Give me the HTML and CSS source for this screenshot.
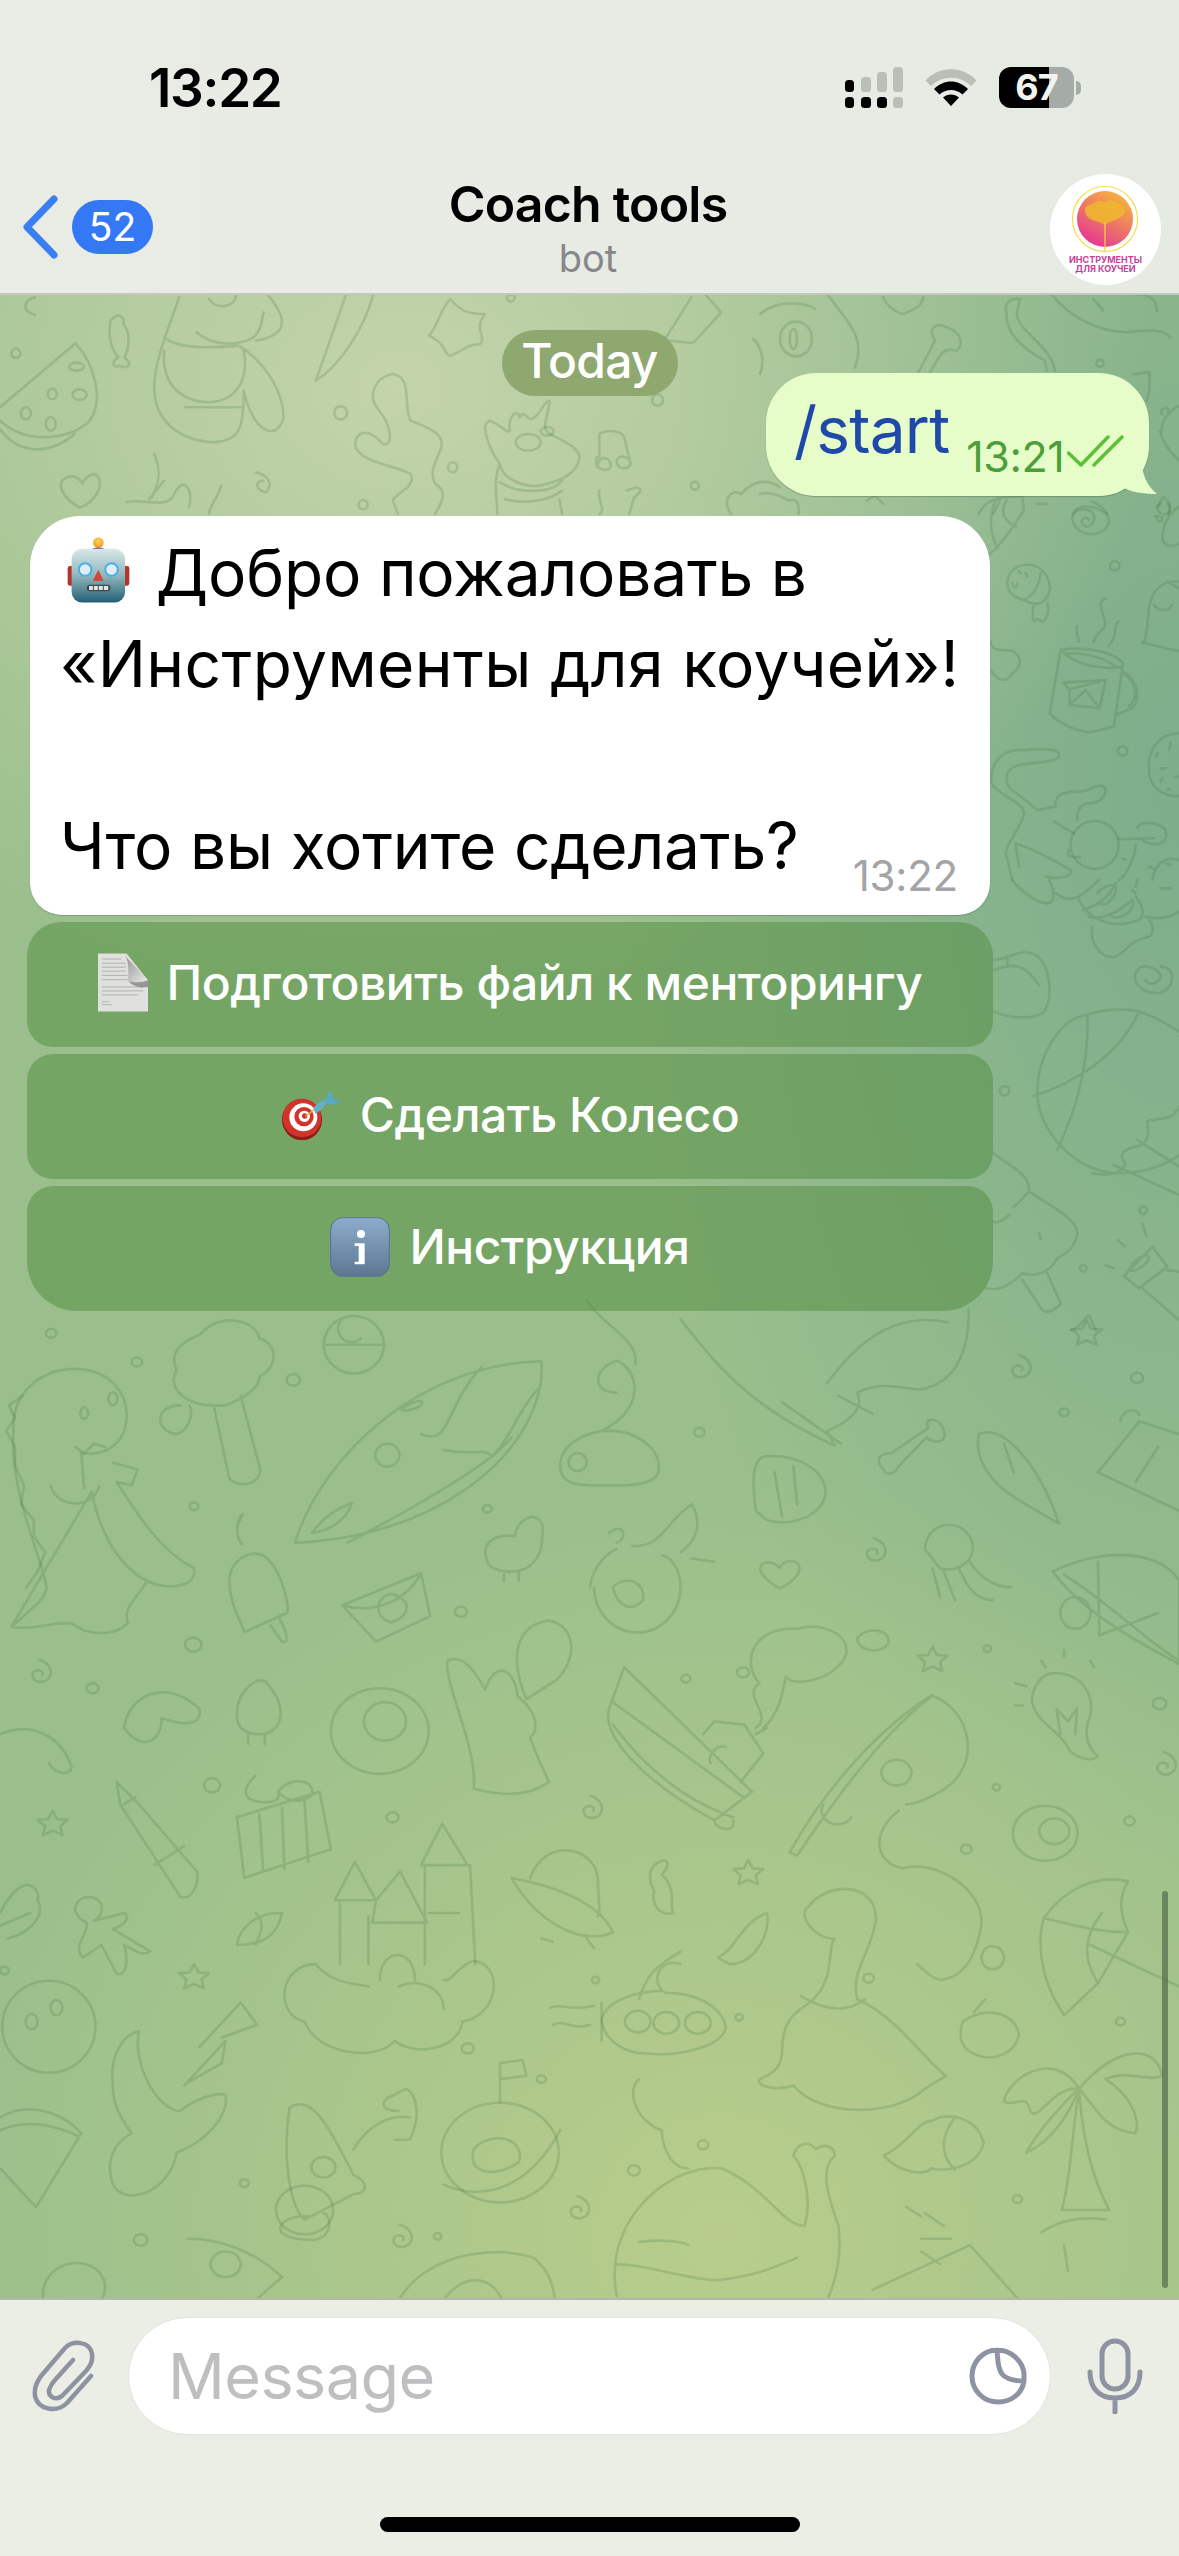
FILE: index.html
```html
<!DOCTYPE html>
<html lang="ru">
<head>
<meta charset="utf-8">
<title>Coach tools</title>
<link rel="stylesheet" href="styles.css">
</head>
<body>
<div class="screen">
  <header class="top">
    <div class="status">
      <span class="clock">13:22</span>
      <div class="status-icons">
        <svg class="signal" width="58" height="41" viewBox="0 0 58 41">
          <rect x="0" y="13" width="9" height="12" rx="3.5" fill="#000"/>
          <rect x="16" y="10" width="10" height="15" rx="3.5" fill="#b9bfb7"/>
          <rect x="32" y="5" width="10" height="20" rx="3.5" fill="#b9bfb7"/>
          <rect x="48" y="0" width="10" height="25" rx="3.5" fill="#b9bfb7"/>
          <rect x="0" y="30" width="9" height="11" rx="3.5" fill="#000"/>
          <rect x="16" y="30" width="10" height="11" rx="3.5" fill="#000"/>
          <rect x="32" y="30" width="10" height="11" rx="3.5" fill="#000"/>
          <rect x="48" y="30" width="10" height="11" rx="3.5" fill="#b9bfb7"/>
        </svg>
        <svg class="wifi" width="52" height="37" viewBox="0 0 52 37">
          <path d="M0.5 11.5C14 -3.5 38 -3.5 51.5 11.5L46 17C35 6 17 6 6 17Z" fill="#b9bfb7"/>
          <path d="M9 20C19 10 33 10 43 20L37.500 25.500C31 19.500 21 19.500 14.500 25.500Z" fill="#000"/>
          <path d="M18 28.500C22.500 24.500 29.500 24.500 34 28.500L26 37Z" fill="#000"/>
        </svg>
        <div class="battery">
          <div class="batt-body"><span class="batt-num">67</span></div>
          <div class="batt-nib"></div>
        </div>
      </div>
    </div>
    <nav class="nav">
      <div class="back">
        <svg width="38" height="64" viewBox="0 0 38 64"><path d="M33 4L6 32L33 60" fill="none" stroke="#3a7ff2" stroke-width="7" stroke-linecap="round" stroke-linejoin="round"/></svg>
        <span class="badge">52</span>
      </div>
      <div class="title">
        <span class="title-name">Coach tools</span>
        <span class="title-sub">bot</span>
      </div>
      <svg class="avatar" width="111" height="111" viewBox="0 0 111 111">
        <defs>
          <linearGradient id="ava" x1="0.8" y1="0" x2="0.2" y2="1"><stop offset="0" stop-color="#f6b83a"/><stop offset="0.55" stop-color="#ec6f6a"/><stop offset="1" stop-color="#e72e9c"/></linearGradient>
        </defs>
        <circle cx="55.500" cy="55.500" r="55.500" fill="#fff"/>
        <circle cx="55" cy="45" r="32.500" fill="none" stroke="#f5dc4e" stroke-width="1.200"/>
        <circle cx="55" cy="45" r="28" fill="url(#ava)"/>
        <path d="M55 51C48 46 38 48 35 38C34 32 40 30 43 30C46 27 52 25 54 29C58 25 66 26 69 30C73 31 76 34 75 38C70 47 60 46 55 51Z" fill="#eeb62f" opacity=".9"/>
        <path d="M55 48V77" stroke="#f3cf3c" stroke-width="1.300"/>
        <text x="55.500" y="89" class="ava-text">ИНСТРУМЕНТЫ</text>
        <text x="55.500" y="98" class="ava-text">ДЛЯ КОУЧЕЙ</text>
      </svg>
    </nav>
  </header>

  <main class="chat">
    <svg class="doodles" viewBox="0 295 1179 2003" preserveAspectRatio="none" aria-hidden="true">
      <defs>
        <path id="star" d="M0 -20L6 -7L20 -6L10 4L13 18L0 11L-13 18L-10 4L-20 -6L-6 -7Z"/>
        <path id="spiral" d="M4 2C8 -4 -2 -8 -7 -3C-12 4 -6 14 3 13C14 12 18 0 14 -9C11 -16 6 -20 0 -22"/>
        <path id="heart" d="M0 24C-14 14 -26 4 -26 -8C-26 -18 -10 -22 0 -8C6 -24 26 -22 26 -8C26 6 12 16 0 24Z"/>
      </defs>
      <g transform="translate(0 1300) scale(.752 .6386)">
        <path d="M15 512C40 485 60 470 62 450C55 400 12 300 18 205C15 140 60 105 105 108C150 112 172 150 168 190C165 225 140 245 108 240L112 295M132 292C122 330 75 325 68 292M150 255L183 265L175 290L155 285M122 300C130 350 150 410 195 440C185 465 162 480 170 505C155 528 115 525 98 508C80 500 50 518 15 512ZM195 440C225 455 262 450 258 420C215 395 185 340 155 285"/>
        <path d="M30 150L12 165L20 185L8 205L20 230L20 260L32 290L28 320L45 345L45 370L60 395L50 425L35 450M100 230L112 240L125 225L140 230M150 145A6 10 0 1 0 150.100 145M112 168A5 9 0 1 0 112.100 168"/>
        <path d="M300 165C250 170 220 140 235 110C220 70 260 60 270 50C290 20 340 30 345 60C370 70 370 105 345 120C345 145 310 160 300 165ZM285 170L305 280C320 295 345 290 346 265L320 150M240 165C205 165 205 205 235 210C250 205 258 180 252 165"/>
        <path d="M470 115A40 45 0 1 1 471 115ZM432 70H510M455 30A12 14 0 0 0 480 60"/>
        <path d="M392 380C430 240 560 100 720 96C728 220 600 370 392 380ZM462 380C560 320 660 250 680 215M560 210C600 230 590 170 640 105M590 235C640 245 640 230 655 245C680 215 690 170 715 140M415 365C430 340 450 325 468 318C460 345 440 360 415 365ZM535 170C555 155 565 155 560 165C545 175 530 175 535 170ZM515 225A16 18 0 1 0 515.100 225"/>
        <path d="M745 260C745 225 780 205 810 205C850 205 878 235 876 265C876 285 850 292 810 290C770 292 745 290 745 260ZM768 240A12 14 0 1 0 768.100 240M800 205C860 170 850 110 820 95C790 105 785 145 820 145M780 0C800 40 850 60 845 100"/>
        <path d="M905 30C950 100 1000 170 1110 228L1100 205C1130 190 1150 170 1140 145C1175 125 1200 140 1225 140C1270 130 1290 80 1288 15M1040 160L1118 225M1100 130C1150 50 1200 20 1260 35M1115 150L1160 178"/>
        <path d="M1005 330C1000 280 1000 255 1015 245C1060 240 1095 265 1098 300C1095 340 1050 355 1020 345ZM1030 270L1040 340M1055 260L1060 320"/>
        <path d="M1175 265C1165 255 1165 240 1185 240L1235 200C1225 185 1250 180 1255 205C1262 225 1240 225 1232 215L1195 260C1190 275 1175 275 1175 265Z"/>
        <path d="M1302 210C1340 190 1390 280 1408 350L1350 310C1310 280 1295 240 1302 210ZM1335 225L1348 270"/>
        <path d="M1460 270L1515 190L1568 210M1460 270L1568 330M1490 190C1490 175 1510 165 1515 180M1510 285L1540 230"/>
        <path d="M315 360C318 340 325 335 322 335C312 350 315 375 322 382M305 440C305 410 330 390 350 400C375 420 385 480 382 490L325 520C315 490 305 470 305 440ZM360 510L375 535C385 540 382 520 372 500"/>
        <path d="M455 478L560 428L572 495L500 535ZM455 478C490 490 535 480 560 428M520 460C500 465 495 495 520 505C545 495 550 470 520 460Z"/>
        <path d="M650 415C635 380 660 365 685 370C685 345 715 325 722 355C720 375 725 400 700 420C680 430 660 425 650 415ZM670 430V440M690 425V440"/>
        <path d="M790 450A57 70 0 1 0 905 450C905 420 890 400 880 400M820 390C800 400 785 430 785 450M815 450C830 430 860 440 855 470C840 490 820 480 815 450ZM810 365C830 345 835 375 820 380M840 385C880 390 890 340 920 320C935 350 925 380 905 395M920 405L950 410"/>
        <use href="#heart" x="1037" y="428"/>
        <use href="#spiral" x="1162" y="395"/>
        <path d="M1230 390A32 38 0 1 1 1294 390C1290 420 1265 425 1250 420ZM1255 425L1270 470M1275 420C1285 445 1295 470 1320 470M1290 410C1300 430 1320 450 1345 450M1240 420L1250 465"/>
        <path d="M1400 425C1480 380 1550 400 1568 440L1568 570C1520 540 1440 490 1400 425ZM1415 430C1470 470 1520 530 1568 565M1460 410L1462 525M1462 525L1540 490M1430 465A20 25 0 1 0 1430.100 465"/>
        <path d="M1060 515C1000 510 985 570 1010 600C985 620 1030 650 1005 670M1060 515C1090 505 1130 520 1125 555C1115 590 1060 610 1045 590C1040 620 1035 650 1015 670M1140 530C1150 510 1190 515 1180 540C1170 555 1140 550 1140 530Z"/>
        <path d="M810 640C800 680 850 750 950 815L1000 770L830 575ZM815 665C850 720 900 780 975 810M815 630L990 780M935 680L950 660L990 665L1015 710L985 755M1005 680L1020 670M965 700C950 695 940 720 945 725M950 815C950 830 980 835 975 815"/>
        <path d="M1050 865L1060 870C1100 800 1170 680 1240 620C1290 640 1310 730 1250 770C1220 790 1210 790 1205 790M1050 865C1100 760 1170 670 1240 618M1095 790A20 20 0 1 0 1132 810M1192 760A20 20 0 1 1 1192.100 760M1195 800C1160 830 1160 880 1200 890C1240 875 1310 920 1305 980C1300 1010 1290 1060 1250 1065C1235 1060 1225 1045 1220 1040M1320 1012A15 18 0 1 0 1320.100 1012"/>
        <path d="M1395 585C1440 580 1455 620 1450 650C1440 680 1445 700 1460 715C1450 725 1425 715 1420 700C1405 670 1375 660 1372 625C1375 600 1385 590 1395 585ZM1410 680L1405 640L1420 660L1432 640L1430 680M1350 600L1365 605M1385 565L1390 575M1415 548V558M1450 565L1455 575M1350 635H1360"/>
        <g><circle cx="1390" cy="835" r="43"/><circle cx="1402" cy="832" r="20"/><use href="#spiral" x="1548" y="730"/></g>
        <path d="M155 755L160 790L240 935C255 940 265 915 262 895L185 790ZM165 790L180 778M205 885L245 855"/>
        <path d="M315 810L425 770L440 860L325 905ZM340 745C325 760 320 780 340 785C370 790 372 780 370 770C385 745 420 750 415 775C400 790 380 785 370 770M345 805L350 895M375 795L378 890M405 785L410 880"/>
        <path d="M0 960C30 890 55 920 50 940C60 960 45 990 10 1000M40 960L0 980"/>
        <path d="M118 935C140 935 140 965 125 972L165 960C175 965 165 980 150 985L200 1020C190 1030 175 1015 165 1010C170 1030 170 1060 155 1055L135 1010L110 1030C95 1010 120 990 115 975C90 960 100 935 118 935Z"/>
        <path d="M315 1010C318 985 340 958 375 960C370 990 355 1010 315 1010ZM340 960C355 975 345 995 340 1010"/>
        <path d="M445 940L472 880L500 940ZM500 940L532 895L568 975H495ZM560 885L588 820L622 885ZM452 945V1040M490 965V1040M565 885V1040M625 885L632 1040M505 1065C505 1015 550 1010 552 1065M570 960H610"/>
        <path d="M420 1040C370 1040 365 1120 405 1130C420 1180 500 1195 525 1160C550 1185 610 1175 615 1130C665 1120 670 1040 630 1035C610 1040 600 1070 590 1065M420 1040C440 1070 470 1070 490 1075M530 1075C560 1060 590 1080 590 1110"/>
        <path d="M680 905C720 985 780 1010 815 990C800 950 750 920 680 905ZM705 905C725 840 790 855 795 905C795 945 800 960 795 965M720 1000L735 1005M780 1000L790 1015"/>
        <path d="M870 885C885 870 895 880 880 900C900 920 890 945 895 960C880 965 865 950 870 925C860 905 865 890 870 885Z"/>
        <path d="M955 1030C980 1015 985 975 1020 960C1025 990 1005 1040 970 1040Z"/>
        <path d="M800 1130C800 1090 880 1075 885 1085C940 1085 965 1120 965 1140C960 1170 900 1185 860 1180C830 1180 805 1160 800 1130ZM850 1095C860 1050 880 1040 905 1020M880 1080A22 25 0 0 1 905 1040"/>
        <circle cx="848" cy="1130" r="17"/><circle cx="886" cy="1132" r="17"/><circle cx="928" cy="1132" r="17"/>
        <path d="M732 1108C745 1100 755 1115 790 1105M735 1135C750 1125 760 1145 785 1135M800 1100V1160"/>
        <path d="M1040 1175C1040 1110 1075 1110 1085 1090C1110 1060 1100 1010 1110 1000C1080 1000 1060 960 1075 950C1100 910 1165 910 1165 970C1160 1020 1130 1050 1140 1095C1190 1120 1230 1190 1258 1215L1230 1235C1190 1280 1090 1280 1055 1230C1030 1240 1005 1230 1010 1220C1030 1210 1040 1200 1040 1175ZM1065 1090C1100 1115 1130 1115 1150 1095"/>
        <path d="M1280 1130C1310 1105 1350 1115 1355 1150C1350 1180 1320 1195 1295 1180C1275 1170 1275 1150 1280 1130ZM1295 1115L1310 1095"/>
        <path d="M1388 968C1430 900 1480 905 1500 910C1480 950 1500 985 1500 990L1460 1070L1415 1120C1380 1060 1380 1000 1388 968ZM1500 990C1450 990 1420 975 1388 968M1460 1070C1440 1030 1440 1000 1465 960M1450 1010L1568 1075"/>
        <path d="M1435 1235C1400 1170 1340 1220 1335 1255C1350 1265 1365 1240 1370 1270C1380 1290 1400 1230 1435 1235ZM1435 1235C1490 1160 1540 1170 1545 1215C1530 1225 1500 1205 1470 1220C1510 1250 1515 1290 1510 1305C1470 1300 1460 1270 1435 1235ZM1435 1235C1420 1250 1380 1300 1365 1335C1395 1320 1420 1280 1435 1235ZM1435 1240C1425 1300 1425 1370 1412 1425H1475C1450 1370 1440 1310 1435 1240ZM1385 1460C1410 1440 1440 1435 1470 1440M1415 1480L1420 1520"/>
        <path d="M1175 1340C1200 1370 1230 1370 1238 1360C1255 1365 1300 1360 1308 1320C1300 1280 1260 1270 1240 1285C1220 1285 1210 1320 1175 1340ZM1270 1280C1250 1310 1250 1340 1270 1362"/>
        <path d="M0 1280C45 1250 90 1280 108 1305L48 1420C30 1400 10 1370 0 1360M0 1300C40 1280 80 1295 105 1310"/>
        <path d="M150 1230C145 1180 165 1150 185 1145C175 1195 210 1270 240 1270C260 1250 290 1240 300 1245C305 1280 270 1320 235 1335C225 1400 165 1420 150 1385C140 1350 150 1320 175 1305C160 1280 150 1260 150 1230Z"/>
        <path d="M265 1170L320 1100L342 1135L295 1155M245 1230L300 1160L295 1195L250 1225"/>
        <ellipse cx="65" cy="1138" rx="62" ry="72"/><ellipse cx="75" cy="1108" rx="8" ry="12"/><ellipse cx="42" cy="1130" rx="8" ry="12"/>
        <path d="M385 1265C415 1240 440 1300 470 1370C490 1380 490 1400 470 1400L405 1440C385 1420 375 1340 385 1265ZM410 1435C375 1430 345 1470 415 1472C445 1470 440 1430 430 1430M470 1330C490 1290 520 1275 545 1280"/>
        <circle cx="430" cy="1358" r="16"/><circle cx="405" cy="1425" r="38"/>
        <path d="M530 1270C510 1270 505 1260 515 1250L540 1235C555 1245 560 1280 545 1315L525 1315"/>
        <circle cx="665" cy="1335" r="78"/>
        <path d="M590 1385C615 1400 690 1420 745 1300M665 1255V1220L700 1215L695 1190L665 1195V1220M630 1330C650 1300 700 1310 690 1350C660 1375 620 1370 630 1330Z"/>
        <path d="M850 1220C830 1240 850 1290 880 1300C880 1320 890 1360 915 1360"/>
        <path d="M820 1560C800 1430 900 1350 960 1360C1020 1390 1040 1450 1070 1450C1080 1410 1070 1360 1055 1340C1060 1320 1075 1315 1085 1330C1095 1320 1110 1325 1110 1340C1090 1360 1100 1400 1115 1450C1120 1500 1110 1540 1100 1566M820 1510C860 1510 900 1530 950 1535C1000 1530 1030 1515 1060 1500M850 1475C880 1470 910 1475 915 1480"/>
        <path d="M250 1470C280 1470 330 1480 375 1530L340 1566M300 1490A20 20 0 1 0 300.100 1490"/>
        <path d="M58 1566C50 1520 100 1490 130 1520C145 1540 140 1556 135 1566"/>
        <path d="M530 1566C570 1490 660 1480 710 1500C730 1520 735 1540 738 1566M590 1566C610 1530 650 1520 668 1566"/>
        <path d="M1160 1550L1290 1480L1355 1566M1205 1420L1225 1435M1230 1430L1255 1450M1225 1470H1265M1225 1490L1250 1510"/>
        <g><use href="#star" x="1445" y="52"/><use href="#star" x="70" y="820"/><use href="#star" x="995" y="897"/><use href="#star" x="258" y="1060"/><use href="#star" x="1240" y="563"/>
          <use href="#spiral" x="1355" y="108"/><use href="#spiral" x="52" y="585"/><use href="#spiral" x="785" y="798"/><use href="#spiral" x="768" y="1425"/><use href="#spiral" x="532" y="1470"/></g>
        <path d="M165 670C170 620 220 590 265 640C270 670 240 665 215 655C215 690 190 710 165 670ZM0 680C40 660 80 680 95 730C95 745 75 745 65 725"/>
        <path d="M315 650C315 610 345 585 355 600C385 640 375 680 345 680C325 680 315 670 315 650ZM330 680V695M352 680V695"/>
        <ellipse cx="505" cy="675" rx="65" ry="67"/><ellipse cx="512" cy="660" rx="28" ry="30"/>
        <path d="M630 765C635 700 590 600 595 565C620 550 640 600 645 610C660 560 685 580 688 620C710 640 720 670 705 685C715 720 725 740 730 755C700 780 660 775 630 765ZM720 610L700 625C680 570 680 510 730 502C765 510 770 560 740 595Z"/>
        <g><circle cx="68" cy="52" r="7"/><circle cx="182" cy="97" r="7"/><circle cx="390" cy="125" r="9"/><circle cx="258" cy="323" r="6"/><circle cx="648" cy="327" r="6"/><circle cx="930" cy="207" r="7"/><circle cx="1415" cy="176" r="6"/><circle cx="1512" cy="122" r="8"/><circle cx="613" cy="488" r="8"/><circle cx="257" cy="540" r="11"/><circle cx="123" cy="608" r="8"/><circle cx="282" cy="760" r="11"/><circle cx="522" cy="810" r="8"/><circle cx="1285" cy="860" r="7"/><circle cx="1502" cy="816" r="7"/><circle cx="1325" cy="763" r="5"/><circle cx="1542" cy="632" r="9"/><circle cx="1313" cy="546" r="5"/><circle cx="912" cy="593" r="6"/><circle cx="988" cy="583" r="8"/><circle cx="6" cy="1050" r="6"/><circle cx="622" cy="1172" r="8"/><circle cx="792" cy="1065" r="5"/><circle cx="983" cy="1123" r="5"/><circle cx="1155" cy="1062" r="7"/><circle cx="1490" cy="1130" r="6"/><circle cx="720" cy="1220" r="6"/><circle cx="325" cy="1383" r="6"/><circle cx="935" cy="1323" r="7"/><circle cx="843" cy="1363" r="8"/><circle cx="1353" cy="1408" r="6"/><circle cx="187" cy="1472" r="9"/><circle cx="582" cy="1466" r="5"/></g>
      </g>
      <g transform="translate(0 294) scale(.4974 .3333)">
        <path d="M70 10C45 20 45 55 70 62M0 340L152 148C190 210 210 320 180 380C150 430 60 460 0 380M0 405C30 470 90 495 150 420"/>
        <ellipse cx="154" cy="218" rx="15" ry="12"/><ellipse cx="105" cy="300" rx="9" ry="16"/><ellipse cx="160" cy="302" rx="14" ry="16"/><ellipse cx="52" cy="358" rx="10" ry="18"/><ellipse cx="102" cy="390" rx="10" ry="20"/><ellipse cx="32" cy="178" rx="9" ry="14"/>
        <path d="M222 80C240 50 250 70 248 90C265 120 258 170 250 190C270 215 255 225 240 215C225 225 225 200 238 190C220 160 218 120 222 80Z"/>
        <path d="M360 10C340 100 310 200 310 280C310 380 360 440 430 445C480 440 490 410 490 290C510 425 560 440 570 370C570 290 530 200 480 155C440 160 360 170 330 130M330 170C325 250 350 320 420 325C480 320 500 250 490 170M372 340H490M395 115C430 160 480 155 510 130C530 100 525 70 530 55M540 5C570 60 590 120 515 140M420 15C430 45 470 45 475 5"/>
        <path d="M695 5L635 260C680 220 730 110 750 5"/>
        <path d="M905 15C880 60 880 100 862 125C900 150 890 180 905 185C935 170 930 155 965 150C980 135 950 105 975 60C950 60 930 60 905 15Z"/>
        <path d="M1335 140L1390 10M1335 140C1370 140 1380 150 1395 145L1450 55L1420 5"/>
        <path d="M790 240C750 250 740 310 760 345C790 400 790 460 770 450C730 385 710 430 715 460C730 510 790 510 825 540C840 580 790 600 790 620L800 660M790 240C830 250 810 330 825 380C860 400 900 420 885 470C870 520 865 540 875 570C900 590 890 620 875 660"/>
        <ellipse cx="685" cy="357" rx="13" ry="20"/><ellipse cx="910" cy="520" rx="9" ry="15"/><ellipse cx="730" cy="632" rx="9" ry="14"/>
        <path d="M160 640C140 625 115 590 125 560C145 530 165 560 165 570C180 530 205 530 200 580C195 610 175 635 160 640ZM310 480C325 530 320 570 305 610M330 560L300 615M255 625C280 610 340 650 350 600C370 540 390 590 380 640M445 575C435 620 420 640 420 660M515 535C540 545 550 570 535 595C515 590 510 560 530 560"/>
        <path d="M1000 660C1000 620 990 560 1005 510C990 480 960 390 985 380C1010 395 1020 420 1025 410C1020 370 1040 340 1045 370C1055 340 1060 390 1075 370C1090 350 1095 320 1105 320C1105 360 1085 400 1105 420C1130 440 1165 460 1165 490C1160 540 1130 560 1085 575C1060 580 1010 560 1005 510M1005 565C1040 600 1110 600 1130 560M1015 615C1050 630 1100 625 1130 590M1125 615L1130 660"/>
        <circle cx="1062" cy="445" r="25"/><circle cx="1100" cy="412" r="13"/>
        <path d="M1205 420C1220 405 1250 410 1255 430L1268 510C1260 530 1240 525 1240 500C1245 480 1260 490 1265 495M1200 490C1190 530 1230 540 1228 510C1225 490 1205 480 1200 520M1205 420L1205 490M1205 590C1200 620 1220 650 1205 660M1260 590C1290 570 1295 590 1275 610L1265 660"/>
        <ellipse cx="1322" cy="318" rx="11" ry="17"/><ellipse cx="1397" cy="575" rx="8" ry="12"/><ellipse cx="1027" cy="12" rx="8" ry="10"/>
        <path d="M1470 660C1450 620 1470 580 1490 600C1520 550 1550 560 1568 580"/>
      </g>
      <g transform="translate(760 294) scale(.3333)">
        <path d="M0 60C60 10 150 30 165 45M205 5C260 80 320 130 285 220M-20 135A80 90 0 0 1 0 240"/>
        <ellipse cx="108" cy="135" rx="48" ry="52"/><ellipse cx="100" cy="135" rx="11" ry="30"/>
        <path d="M475 235L525 140C500 100 530 85 560 100C590 110 620 140 590 170C570 165 555 165 540 185L510 235"/>
        <path d="M370 10C380 40 420 60 430 60C480 40 485 30 490 10"/>
        <path d="M740 60C730 30 750 10 780 15L770 60C780 120 870 150 885 230M740 60C735 110 780 160 855 200L860 230"/>
        <path d="M875 0C920 60 1000 110 1100 115C1140 110 1210 100 1230 130M1000 15L1030 50M1115 0C1165 0 1190 10 1190 50"/>
        <circle cx="1020" cy="208" r="11"/>
        <path d="M1120 240L1168 235C1170 270 1170 300 1160 320"/>
        <path d="M1205 420C1200 380 1230 350 1257 335M1205 360C1200 340 1230 330 1225 360M1200 410C1210 460 1250 490 1257 500"/>
        <path d="M1190 640L1210 610C1230 620 1235 640 1225 660"/>
        <path d="M0 600C40 590 70 610 85 620C110 610 120 630 115 660M320 620L345 605L370 630M830 630L860 630M940 660C950 630 1000 630 1040 660M700 660L720 620"/>
      </g>
      <g transform="translate(979 480) scale(.3333)">
        <path d="M0 100C20 60 50 50 130 50L135 90C110 130 70 190 30 225L0 185M50 60C30 110 30 150 55 205M90 50C60 90 70 120 110 140"/>
        <path d="M340 65C395 90 400 130 375 150C340 175 285 160 280 115C280 85 325 80 342 100C355 125 330 150 312 135C300 120 320 105 330 120"/>
        <path d="M85 310C85 270 120 250 160 255C200 265 220 310 210 340C195 380 160 375 135 360C105 350 85 340 85 310ZM135 360C170 340 180 315 185 280M165 375C160 395 160 415 165 425C175 410 180 420 190 425C205 420 212 390 205 370M100 310C105 330 115 320 115 310M120 275L125 280M140 280L145 290"/>
        <circle cx="407" cy="257" r="14"/><circle cx="431" cy="813" r="14"/>
        <path d="M380 355C340 370 400 430 370 450C345 470 345 480 345 485M295 440C285 455 300 470 300 485M418 425C400 440 420 470 388 498"/>
        <path d="M245 510L212 700C240 730 300 760 340 755C370 750 400 740 405 740L432 550C400 510 300 500 245 510ZM245 510C290 560 380 570 430 560M265 520C320 520 370 530 410 560M430 575C470 590 490 650 460 685L410 705M440 585C470 610 480 650 450 680"/>
        <path d="M252 608L380 600L362 685L272 675V628ZM272 628L380 600M272 675L320 630L362 685"/>
        <path d="M600 305C550 300 520 330 510 380C505 430 505 480 490 490C520 490 560 510 600 512M525 375C540 395 570 395 580 375M565 305C580 310 590 320 600 325"/>
        <path d="M600 760C540 760 505 810 510 870C510 920 550 950 600 948M530 830L535 820M575 790L570 810M545 865H560M550 895L545 905M565 930L570 925M590 890H600"/>
        <path d="M35 485C40 510 50 510 100 512C130 530 130 560 100 580C85 605 60 610 35 570"/>
        <path d="M240 825C240 800 170 810 120 810C70 810 30 850 38 910C60 950 130 960 135 1000C130 1040 80 1090 80 1120L100 1200M240 825C240 850 170 845 120 855C70 870 70 920 120 945L175 990L230 980C225 940 260 935 300 935C330 935 345 915 370 918C395 930 370 970 330 970C310 970 290 990 295 1020"/>
        <circle cx="347" cy="1095" r="72"/>
        <path d="M225 1025L285 1060M420 1078L525 1075M430 1135L440 1140M475 1045C480 1025 530 1020 560 1050C570 1090 530 1105 490 1080M470 1095C470 1130 440 1190 420 1200M270 1110C260 1130 280 1135 305 1130M110 1095L120 1160M110 1090C170 1110 240 1150 275 1170C280 1190 240 1200 200 1190"/>
        <path d="M520 1200C530 1140 570 1130 600 1140M510 1160L530 1170M560 1150L575 1155"/>
        <path d="M540 110C520 100 530 115 540 125C555 125 550 110 540 110ZM545 70A18 18 0 1 0 565 70M600 80C570 100 550 130 550 180C560 205 590 200 600 190"/>
      </g>
      <g transform="translate(979 880) scale(.3333)">
        <path d="M100 0C130 40 180 70 200 70C240 70 220 20 210 0M230 40C260 60 270 60 300 50C330 30 350 10 360 0M300 60C330 120 400 150 480 120C505 100 480 60 470 50M340 140C330 190 370 240 410 230C450 210 450 180 510 170C530 155 520 130 510 120M500 110C540 120 580 110 600 95M310 90C380 70 400 30 410 10M355 40C370 20 400 10 410 20C415 50 380 85 360 70M330 110C360 120 400 110 460 60M400 110C440 120 470 80 460 60M460 30L470 40M470 20L475 0M545 25H575"/>
        <path d="M545 260C590 260 595 320 540 340C480 340 455 300 475 270C490 250 530 260 545 285C550 300 515 325 500 300"/>
        <path d="M45 240C80 240 130 200 170 225C220 260 220 360 195 395C170 420 90 415 45 395M45 270C90 255 130 240 180 315M85 230V255"/>
        <circle cx="77" cy="633" r="14"/><circle cx="493" cy="991" r="11"/><circle cx="313" cy="1165" r="10"/>
        <path d="M325 405C250 410 175 520 175 640C175 750 290 880 420 880C500 880 570 850 600 825M325 405C380 385 450 385 480 395C520 405 580 440 600 455M325 405C330 520 310 650 235 810M165 648C280 610 420 530 480 395M340 880C390 890 430 880 440 850C420 830 425 810 470 800C510 795 510 760 505 725C530 710 580 730 600 680M405 855L600 945M475 780L600 860"/>
        <path d="M45 820C90 860 155 880 150 935C220 980 300 1020 295 1065C280 1115 260 1120 235 1135C210 1180 170 1190 130 1180C80 1230 50 1230 20 1225M145 938C130 960 110 975 105 980M90 1005C70 1025 55 1030 40 1025M180 1060L185 1078M130 1200L190 1290C210 1305 240 1280 245 1270L205 1180"/>
        <path d="M380 1157L405 1165M415 1080L437 1098M490 1030L503 1070M435 1188L520 1100L565 1160L480 1225ZM450 1170C460 1140 500 1120 510 1130C510 1150 470 1180 450 1170ZM490 1225L600 1320M560 1170L600 1175M275 1350C300 1350 320 1310 330 1305L350 1350"/>
      </g>
    </svg>

    <div class="day">Today</div>

    <div class="out">
      <span class="out-text">/start</span>
      <span class="out-time">13:21</span>
      <svg class="checks" width="58" height="34" viewBox="0 0 58 34"><path d="M1.500 18L14 30L41 2M27 30L55 2" fill="none" stroke="#5bc234" stroke-width="3.500" stroke-linecap="round" stroke-linejoin="round"/></svg>
      <svg class="out-tail" width="40" height="42" viewBox="0 0 40 42"><path d="M0 0H20C20 20 26 32 36 40C20 40 6 38 -2 30Z" fill="#e6fdc9"/></svg>
    </div>

    <div class="in">
      <div class="in-text">
        <p class="line"><svg class="robot" viewBox="80 50 197 205" width="65" height="68">
          <defs>
            <linearGradient id="rh" x1="0" y1="0" x2="0" y2="1"><stop offset="0" stop-color="#d9e8e8"/><stop offset=".5" stop-color="#8fb6bd"/><stop offset="1" stop-color="#245f74"/></linearGradient>
            <radialGradient id="rb" cx=".5" cy=".35" r=".6"><stop offset="0" stop-color="#ffd45a"/><stop offset="1" stop-color="#f09a20"/></radialGradient>
          </defs>
          <rect x="85" y="140" width="20" height="60" rx="7" fill="#b5332b"/><rect x="252" y="140" width="20" height="60" rx="7" fill="#b5332b"/>
          <circle cx="178" cy="70" r="16" fill="url(#rb)"/>
          <path d="M154 92C165 82 190 82 202 92C195 103 162 103 154 92Z" fill="#6c4f9a"/>
          <rect x="97" y="88" width="162" height="163" rx="32" fill="url(#rh)"/>
          <circle cx="138" cy="151" r="19" fill="#dfeef0" stroke="#4aaee6" stroke-width="6"/>
          <circle cx="218" cy="151" r="19" fill="#dfeef0" stroke="#4aaee6" stroke-width="6"/>
          <path d="M178 152L194 186H161Z" fill="#cf4a3a"/>
          <rect x="143" y="197" width="72" height="20" rx="9" fill="#3e4a50"/>
          <path d="M150 201h58v12h-58z" fill="#e4e6e6"/><path d="M163 200v14M178 200v14M193 200v14" stroke="#3e4a50" stroke-width="3"/>
        </svg> Добро пожаловать в</p>
        <p class="line line-wide">«Инструменты для коучей»!</p>
        <p class="line">&nbsp;</p>
        <p class="line">Что вы хотите сделать?</p>
      </div>
      <span class="in-time">13:22</span>
    </div>

    <div class="keys">
      <div class="key key-first">
        <svg class="ico" width="50" height="59" viewBox="113 68 152 177">
          <defs><linearGradient id="pf" x1="0" y1="0" x2="1" y2="1"><stop offset="0" stop-color="#8b8b8b"/><stop offset="1" stop-color="#ececec"/></linearGradient></defs>
          <path d="M113 68H200L265 150V245H113Z" fill="#e0e0de"/>
          <path d="M125 85h60M125 98h72M125 110h72M125 122h72M125 135h78M125 148h78M125 170h125M125 182h125M125 194h110M125 215h22M125 224h30" stroke="#9a9a9a" stroke-width="2"/>
          <path d="M190 70C210 85 205 130 205 152C225 160 250 155 265 150Z" fill="url(#pf)"/>
          <path d="M205 152C225 160 250 155 265 150V170C240 175 215 165 205 152Z" fill="#666" opacity=".6"/>
        </svg>
        <span>Подготовить файл к менторингу</span>
      </div>
      <div class="key">
        <svg class="ico" width="60" height="51" viewBox="675 488 180 153">
          <ellipse cx="738" cy="580" rx="60" ry="62" fill="#8f1a16"/>
          <ellipse cx="738" cy="575" rx="58" ry="58" fill="#d0342b"/>
          <ellipse cx="742" cy="573" rx="42" ry="42" fill="#fff"/>
          <ellipse cx="744" cy="571" rx="29" ry="29" fill="#d0342b"/>
          <ellipse cx="745" cy="570" rx="17" ry="17" fill="#fff"/>
          <ellipse cx="746" cy="569" rx="8" ry="8" fill="#d0342b"/>
          <path d="M748 570L775 550" stroke="#e5b53a" stroke-width="4"/>
          <path d="M772 545C785 530 800 520 812 522C812 535 795 555 778 562Z" fill="#62b1c9"/>
          <path d="M806 528L822 490L835 520L855 525L830 536L810 532Z" fill="#5aa8c4"/>
        </svg>
        <span>Сделать Колесо</span>
      </div>
      <div class="key key-last">
        <svg class="ico" width="60" height="60" viewBox="810 858 180 180">
          <defs><linearGradient id="ib" x1="0" y1="0" x2="0" y2="1"><stop offset="0" stop-color="#8daccc"/><stop offset="1" stop-color="#5e7692"/></linearGradient></defs>
          <rect x="812" y="860" width="176" height="176" rx="36" fill="url(#ib)" stroke="#587190" stroke-width="3"/>
          <circle cx="903" cy="909" r="12" fill="#fff"/>
          <path d="M884 937H914V1000H884V992H896V945H884Z" fill="#fff"/>
        </svg>
        <span>Инструкция</span>
      </div>
    </div>

    <div class="scroll"></div>
  </main>

  <footer class="bottom">
    <div class="composer">
      <svg class="icon-clip" width="64" height="72" viewBox="0 0 64 72"><path d="M59 36L35 63C25 73 6 70 3 56C2 47 5 42 9 36L33 8C41 0 58 1 60 14C61 22 58 26 54 31L30 56C24 61 16 57 17 50C18 47 21 42 23 40L41 20" fill="none" stroke="#8e93a1" stroke-width="4.500" stroke-linecap="round" stroke-linejoin="round"/></svg>
      <div class="field">
        <span class="placeholder">Message</span>
        <svg class="icon-sticker" width="58" height="58" viewBox="0 0 58 58"><path d="M55 34C53 47 42 55 29 55C14 55 3 43 3 29C3 15 14 3 28 3C42 3 54 14 55 27ZM28 3C29 12 28 20 33 27C38 33 46 34 55 34" fill="none" stroke="#8e93a1" stroke-width="5" stroke-linecap="round" stroke-linejoin="round"/></svg>
      </div>
      <svg class="icon-mic" width="56" height="76" viewBox="0 0 56 76"><rect x="15" y="3" width="26" height="48" rx="13" fill="none" stroke="#8e93a1" stroke-width="5"/><path d="M3 34C3 50 12 60 28 60C44 60 53 50 53 34M28 60V74" fill="none" stroke="#8e93a1" stroke-width="5" stroke-linecap="round"/></svg>
    </div>
    <div class="home"></div>
  </footer>
</div>
</body>
</html>
```

FILE: styles.css
```css
* { box-sizing: border-box; }
html, body { margin: 0; padding: 0; }
body { font-family: Inter, "Liberation Sans", sans-serif; background: #e8ede4; }
p { margin: 0; }
.screen { width: 1179px; height: 2556px; display: flex; flex-direction: column; overflow: hidden; }

.top { height: 295px; flex: none; background: linear-gradient(90deg, #e9ece5, #e5ebe3); border-bottom: 2px solid #c3c7c0; }
.status { height: 174px; display: flex; justify-content: space-between; align-items: flex-start; padding: 60px 98px 0 149px; }
.clock { font-size: 53px; line-height: 56px; font-weight: 600; letter-spacing: -1.3px; color: #000; }
.status-icons { display: flex; align-items: center; gap: 22px; padding-top: 7px; }
.battery { display: flex; align-items: center; gap: 2px; }
.batt-body { width: 75px; height: 41px; border-radius: 12px; background: linear-gradient(90deg, #000 50px, #a5aba6 50px); display: flex; align-items: center; justify-content: center; }
.batt-num { font-size: 36px; font-weight: 700; color: #f2f4f0; letter-spacing: -1px; line-height: 41px; }
.batt-nib { width: 5px; height: 14px; background: #a5aba6; border-radius: 0 5px 5px 0; }

.nav { position: relative; height: 119px; display: flex; align-items: flex-start; justify-content: space-between; padding: 0 18px 0 24px; }
.back { display: flex; align-items: center; gap: 13px; margin-top: 21px; }
.back svg { margin-left: -3px; }
.badge { width: 81px; height: 54px; border-radius: 27px; background: #3478f6; color: #fff; font-size: 39px; line-height: 54px; text-align: center; }
.title { position: absolute; left: 0; right: 3px; top: 0; display: flex; flex-direction: column; align-items: center; }
.title-name { font-size: 50px; line-height: 60px; font-weight: 600; letter-spacing: -.8px; color: #000; }
.title-sub { font-size: 38px; line-height: 46px; color: #85878a; margin-top: 1px; }
.avatar { display: block; position: relative; }
.ava-text { font: 700 9px Inter, "Liberation Sans", sans-serif; fill: #c93f9b; text-anchor: middle; }

.chat {
  position: relative; flex: 1; min-height: 0; padding: 35px 0 0; display: flex; flex-direction: column; overflow: hidden;
  background:
    radial-gradient(ellipse 750px 620px at 400px 90px, #c4d4ab 0%, rgba(196,212,171,0) 100%),
    radial-gradient(ellipse 800px 760px at 720px 1940px, #b8cd8b 0%, rgba(184,205,139,0) 100%),
    radial-gradient(ellipse 560px 1100px at 1179px 500px, #7dad8c 0%, rgba(125,173,140,0) 100%),
    #9abf8c;
}
.doodles { position: absolute; left: 0; top: 0; width: 100%; height: 100%; fill: none; stroke: rgba(62,112,62,.2); stroke-width: 2.6; stroke-linecap: round; stroke-linejoin: round; }
.doodles * { vector-effect: non-scaling-stroke; }

.day { position: relative; align-self: center; width: 176px; height: 66px; border-radius: 33px; background: #8fa870; color: #fff; font-size: 48px; line-height: 62px; text-align: center; font-weight: 500; letter-spacing: -.8px; }

.out { position: relative; align-self: flex-end; display: flex; align-items: flex-end; margin: -23px 30px 0 0; width: 383px; height: 123px; padding: 0 0 21px 28px; border-radius: 50px; background: #e6fdc9; box-shadow: 0 1px 1px rgba(60,90,60,.35); }
.out-text { font-size: 64px; line-height: 74px; color: #1f49a8; letter-spacing: -.8px; margin-bottom: 8px; }
.out-time { font-size: 43px; line-height: 38px; color: #4b9e3a; margin-left: 17px; letter-spacing: -.4px; }
.checks { margin-left: 3px; margin-bottom: 6px; }
.out-tail { position: absolute; right: -12px; bottom: 0; }

.in { position: relative; margin: 20px 0 0 30px; width: 960px; height: 399px; padding: 11px 0 0 30px; border-radius: 50px 50px 32px 32px; background: #fff; box-shadow: 0 1px 1px rgba(60,90,60,.3); }
.line { font-size: 64px; line-height: 91px; height: 91px; color: #000; white-space: nowrap; letter-spacing: -.2px; }
.line-wide { letter-spacing: .4px; }
.robot { vertical-align: -8px; margin: 0 7px 0 6px; }
.in-time { position: absolute; right: 32px; bottom: 17px; font-size: 42px; line-height: 44px; color: #a3a4a7; letter-spacing: -.2px; }

.keys { margin: 7px 0 0 27px; width: 966px; display: flex; flex-direction: column; gap: 7px; position: relative; }
.key { height: 125px; padding-bottom: 4px; border-radius: 26px; background: rgba(76,136,58,.47); display: flex; align-items: center; justify-content: center; gap: 19px; color: #fff; font-size: 48px; font-weight: 500; letter-spacing: -.5px; }
.key-first { border-radius: 34px 34px 26px 26px; }
.key-last { border-radius: 26px 26px 50px 50px; }
.ico { flex: none; }

.scroll { position: absolute; left: 1162px; top: 1596px; width: 6px; height: 397px; border-radius: 3px; background: rgba(68,92,68,.6); }

.bottom { height: 258px; flex: none; background: #eaeee4; border-top: 2px solid #b2b6ae; display: flex; flex-direction: column; align-items: center; }
.composer { width: 100%; display: flex; align-items: center; padding: 17px 36px 0 32px; }
.icon-clip { flex: none; margin-right: 32px; }
.field { flex: none; width: 923px; height: 118px; border-radius: 59px; background: #fff; border: 1px solid #e1e3dc; display: flex; align-items: center; justify-content: space-between; padding: 0 23px 0 39px; }
.placeholder { font-size: 63px; line-height: 70px; color: #bfbfc2; letter-spacing: -.6px; }
.icon-mic { flex: none; margin-left: 36px; }
.home { width: 420px; height: 15px; border-radius: 8px; background: #000; margin-top: 82px; }
```
